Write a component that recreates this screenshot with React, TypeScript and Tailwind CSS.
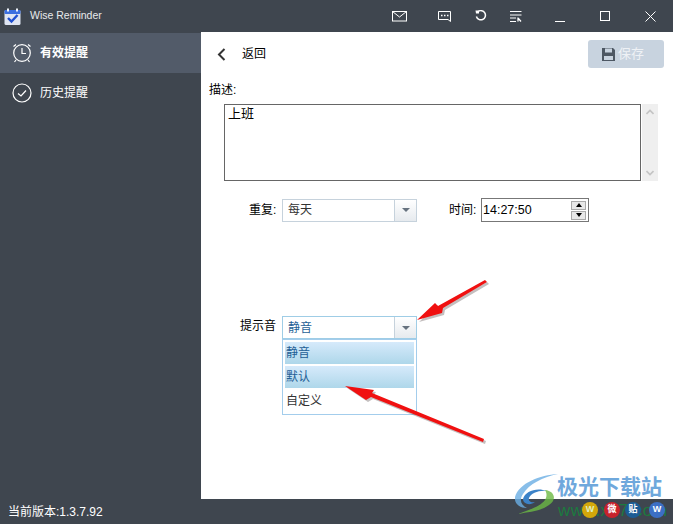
const cjk = "font-['Liberation_Sans','Noto_Sans_CJK_SC',sans-serif]";

function CalendarLogo() {
  return (
    <svg width="17" height="17" viewBox="0 0 17 17">
      <rect x="0.5" y="2" width="16" height="15" rx="1.5" fill="#dfe5f3" />
      <rect x="0.5" y="2" width="16" height="4" rx="1" fill="#3b6fe0" />
      <rect x="3" y="0.5" width="2" height="3" fill="#eef2fa" />
      <rect x="12" y="0.5" width="2" height="3" fill="#eef2fa" />
      <path d="M4 10 L7.5 13.5 L13.5 7" fill="none" stroke="#1f4fd0" strokeWidth="2.4" />
    </svg>
  );
}

function TitleBarIcons() {
  return (
    <div className="flex items-center text-white">
      <svg width="15" height="11" viewBox="0 0 15 11" fill="none" stroke="currentColor">
        <rect x="0.5" y="0.5" width="14" height="9.5" />
        <path d="M0.5 0.5 L7.5 6 L14.5 0.5" />
      </svg>
      <svg className="ml-[31px]" width="13" height="11" viewBox="0 0 13 11" fill="none" stroke="currentColor">
        <path d="M0.5 0.5 H12.5 V10.5 L10 8.5 H0.5 Z" />
        <path d="M3 4.5 H4.5 M6 4.5 H7.5 M9 4.5 H10.5" strokeWidth="1.5" />
      </svg>
      <svg className="ml-[24px]" width="12" height="12" viewBox="0 0 12 12" fill="none" stroke="currentColor" strokeWidth="1.5">
        <path d="M3 1.6 A4.6 4.6 0 1 1 1.4 6.5" />
        <path d="M0.5 0.5 H4 V3.5 H1 Z" fill="currentColor" stroke="none" />
      </svg>
      <svg className="ml-[23px]" width="12" height="11" viewBox="0 0 12 11" fill="none" stroke="currentColor">
        <path d="M0 0.5 H11.5 M0 4 H11.5 M0 7 H6 M0 10.5 H6" />
        <path d="M8 6.5 V10.5 M8 7 L11 10.5" strokeWidth="1.3" />
      </svg>
      <div className="ml-[33px] mt-[10px] h-px w-[10px] bg-white" />
      <div className="ml-[35px] size-[10px] border border-white" />
      <svg className="ml-[35px]" width="11" height="11" viewBox="0 0 11 11" stroke="currentColor" fill="none">
        <path d="M0.5 0.5 L10.5 10.5 M10.5 0.5 L0.5 10.5" />
      </svg>
    </div>
  );
}

function Caret() {
  return <div className="size-0 border-x-[4px] border-t-[4px] border-x-transparent border-t-[#66727f]" />;
}

function Arrows() {
  const first = "M487 282 L443 308 L442 313 L417 320 L435 303 L438 306 L485 280 Z";
  const second = "M483 442 L371 397 L366 400 L345 386 L374 390 L372 393 L484 439 Z";
  return (
    <svg className="absolute left-0 top-0" width="673" height="524" viewBox="0 0 673 524">
      <g fill="#6d6060" opacity="0.4" transform="translate(2 2)">
        <path d={first} />
        <path d={second} />
      </g>
      <g fill="#f01010">
        <path d={first} />
        <path d={second} />
      </g>
    </svg>
  );
}

function Watermark() {
  return (
    <div className="absolute left-[515px] top-[473px] h-[46px] w-[155px]">
      <svg className="absolute left-0 top-0" width="48" height="46" viewBox="0 0 48 46" fill="none">
        <path d="M43 1 C25 2 4 10 0 24 C-1 30 4 35 12 35 C6 32 4 27 8 21 C14 11 28 4 43 1 Z" fill="#6aaee4" opacity="0.8" />
        <path d="M8 26 C10 18 22 14 32 18 C24 17 16 20 14 25 C13 28 16 30 20 29 C15 33 8 31 8 26 Z" fill="#3b82c8" />
        <path d="M30 17 C40 18 42 27 34 32 C26 38 14 39 3 41 C14 37 26 33 30 27 C32 24 32 20 30 17 Z" fill="#6cb944" opacity="0.8" />
      </svg>
      <div className={`absolute left-[42px] top-[1px] text-[21px] font-bold leading-[26px] whitespace-nowrap text-[#6fa8dc] ${cjk}`}>
        极光下载站
      </div>
      <div className="absolute left-[43px] top-[29px] font-['Liberation_Sans',sans-serif] text-[17px] leading-[17px] tracking-[0.5px] whitespace-nowrap text-[#1c7a3f]">
        www.xz7.com
      </div>
      <div className="absolute left-[67px] top-[29px] flex size-[16px] items-center justify-center rounded-full bg-[#d4a70a] text-[9px] font-bold text-[#dff0c0]">W</div>
      <div className="absolute left-[89px] top-[29px] flex size-[16px] items-center justify-center rounded-full bg-[#c8222c] text-[9px] font-bold text-white">微</div>
      <div className="absolute left-[110px] top-[29px] flex size-[16px] items-center justify-center rounded-full bg-[#1c5c94] text-[9px] font-bold text-white">贴</div>
      <div className="absolute left-[134px] top-[29px] flex size-[16px] items-center justify-center rounded-full bg-[#3c6fc4] text-[9px] font-bold text-white">W</div>
    </div>
  );
}

export default function App() {
  return (
    <div className={`relative flex h-[524px] w-[673px] flex-col overflow-hidden bg-[#3f464f] text-[12px] text-black ${cjk}`}>
      <header className="flex h-[32px] shrink-0 items-center pl-[4px] pr-[17px] text-white">
        <CalendarLogo />
        <span className="ml-[9px] text-[10.5px] text-[#e8eaec]">Wise Reminder</span>
        <div className="ml-auto">
          <TitleBarIcons />
        </div>
      </header>

      <div className="flex min-h-0 flex-1">
        <aside className="w-[201px] shrink-0 pt-px text-[12px] text-white">
          <div className="flex h-[40px] items-center gap-[8px] bg-[#525b69] pl-[12px] font-bold">
            <svg width="20" height="20" viewBox="0 0 20 20" fill="none" stroke="currentColor" strokeWidth="1.2">
              <circle cx="10" cy="10" r="8.3" />
              <path d="M10 5 V10.5 H14" />
              <path d="M1.5 3.5 L4 1.5 M18.5 3.5 L16 1.5 M4 17 L2.5 19 M16 17 L17.5 19" />
            </svg>
            有效提醒
          </div>
          <div className="flex h-[40px] items-center gap-[8px] pl-[12px]">
            <svg width="20" height="20" viewBox="0 0 20 20" fill="none" stroke="currentColor" strokeWidth="1.2">
              <circle cx="10" cy="10" r="9" />
              <path d="M6 10.5 L9 13 L14 7.5" />
            </svg>
            历史提醒
          </div>
        </aside>

        <main className="flex-1 bg-white">
          <div className="flex h-[42px] items-center pl-[16px] pr-[9px] pt-[2px]">
            <svg width="9" height="13" viewBox="0 0 9 13" fill="none" stroke="#333" strokeWidth="2">
              <path d="M7.5 1 L2 6.5 L7.5 12" />
            </svg>
            <span className="ml-[16px] text-[12px]">返回</span>
            <button className="ml-auto flex h-[28px] w-[76px] items-center justify-center gap-[3px] rounded-[3px] bg-[#c8d3df] pr-[6px] text-[13px] text-[#eef1f5]">
              <svg width="13" height="13" viewBox="0 0 13 13">
                <path d="M0 0 H11 L13 2 V13 H0 Z" fill="#4d5763" />
                <rect x="3" y="0.5" width="7" height="4" fill="#c8d3df" />
                <rect x="2" y="8" width="9" height="4" fill="#c8d3df" />
              </svg>
              保存
            </button>
          </div>

          <div className="ml-[8px] mt-[8px] leading-[16px]">描述:</div>
          <div className="ml-[23px] mt-[6px] flex gap-px">
            <div className="h-[77px] w-[417px] border border-[#666] px-[3px] py-[1px] text-[13px] leading-[16px]">上班</div>
            <div className="flex h-[77px] w-[16px] flex-col items-center justify-between bg-[#efefef] py-[5px] text-[#c4c4c4]">
              <svg width="8" height="6" viewBox="0 0 8 6" fill="none" stroke="currentColor" strokeWidth="1.6"><path d="M0.5 5 L4 1.5 L7.5 5" /></svg>
              <svg width="8" height="6" viewBox="0 0 8 6" fill="none" stroke="currentColor" strokeWidth="1.6"><path d="M0.5 1 L4 4.5 L7.5 1" /></svg>
            </div>
          </div>

          <div className="mt-[17px] flex h-[24px] items-center">
            <span className="ml-[48px] w-[33px] leading-[16px]">重复:</span>
            <div className="flex h-[23px] w-[135px] items-center border border-[#c6d2dc] text-[12px] text-[#333]">
              <span className="flex-1 pl-[5px]">每天</span>
              <div className="flex h-full w-[22px] items-center justify-center border-l border-[#c6d2dc] bg-gradient-to-b from-white to-[#e6eaee]">
                <Caret />
              </div>
            </div>
            <span className="ml-[32px] w-[32px] leading-[16px]">时间:</span>
            <div className="flex h-[24px] w-[108px] items-center border border-[#777] pl-[1px] pr-[2px] text-[12.5px]">
              <span className="flex-1">14:27:50</span>
              <div className="flex flex-col gap-px">
                <div className="flex h-[9px] w-[15px] items-center justify-center border border-[#aaa] bg-[#e8e8e8]">
                  <div className="size-0 border-x-[3px] border-b-[4px] border-x-transparent border-b-black" />
                </div>
                <div className="flex h-[9px] w-[15px] items-center justify-center border border-[#aaa] bg-[#e8e8e8]">
                  <div className="size-0 border-x-[3px] border-t-[4px] border-x-transparent border-t-black" />
                </div>
              </div>
            </div>
          </div>

          <div className="ml-[39px] mt-[94px] flex">
            <span className="w-[42px] pt-[2px] leading-[16px]">提示音</span>
            <div className="w-[135px]">
              <div className="flex h-[23px] items-center border border-[#9fcde6] text-[#1f5f96]">
                <span className="flex-1 pl-[5px]">静音</span>
                <div className="flex h-full w-[22px] items-center justify-center border-l border-[#c6d2dc] bg-gradient-to-b from-white to-[#e6eaee]">
                  <Caret />
                </div>
              </div>
              <div className="flex h-[76px] flex-col gap-[2px] border border-[#a3cdec] p-[2px]">
                <div className="flex h-[22px] items-center bg-gradient-to-b from-[#d6eafb] to-[#aed7ea] pl-[1px] text-[#1f5f96]">静音</div>
                <div className="flex h-[22px] items-center bg-gradient-to-b from-[#d6eafb] to-[#aed7ea] pl-[1px] text-[#1f5f96]">默认</div>
                <div className="flex h-[22px] items-center pl-[1px] text-[#333]">自定义</div>
              </div>
            </div>
          </div>
        </main>
      </div>

      <footer className="flex h-[25px] shrink-0 items-center pl-[8px] text-[12px] text-white">当前版本:1.3.7.92</footer>
      <Arrows />
      <Watermark />
    </div>
  );
}
